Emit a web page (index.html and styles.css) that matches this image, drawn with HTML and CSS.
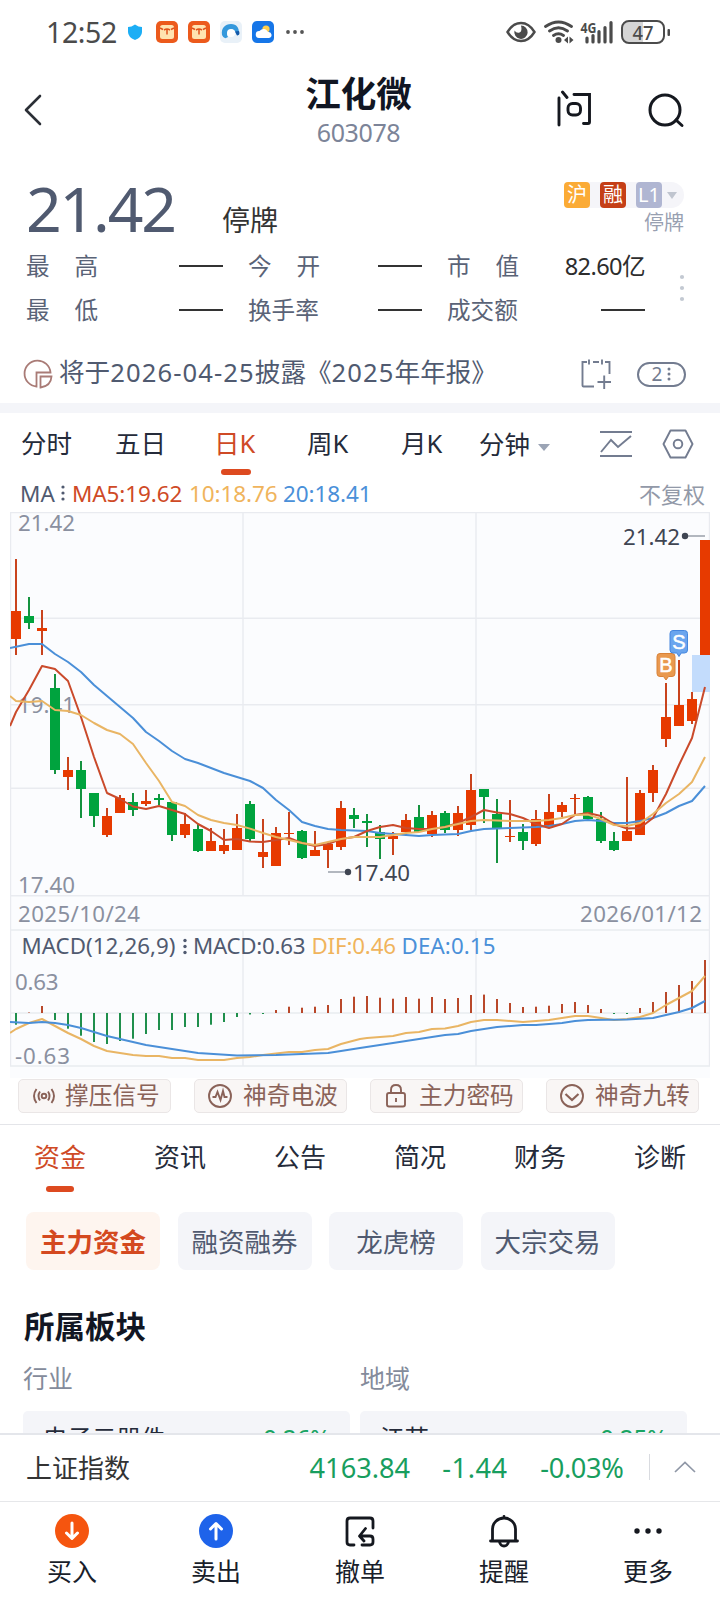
FILE: index.html
```html
<!DOCTYPE html>
<html lang="zh-CN">
<head>
<meta charset="utf-8">
<title>江化微 603078</title>
<link rel="stylesheet" href="styles.css">
</head>
<body>
<div class="screen">
  <div class="status">
    <span class="clock">12:52</span>
    <svg class="status-left" width="180" height="28" viewBox="126 18 180 28">
      <path d="M135 24.5q3.500 2.500 7 2.500v5q0 5-7 8q-7-3-7-8v-5q3.500 0 7-2.500z" fill="#1caef5"/>
      <g id="packet">
        <rect x="156" y="21" width="22" height="22" rx="5" fill="#ec5a1c"/>
        <rect x="160" y="25" width="14" height="14" rx="2.500" fill="#ffe3b0"/>
        <path d="M160 28l3 1.500M174 28l-3 1.500M164 30q3-1.800 6 0M167 29.500v5" fill="none" stroke="#e0531b" stroke-width="1.500"/>
      </g>
      <use href="#packet" x="32"/>
      <rect x="220" y="21" width="22" height="22" rx="5" fill="#e9f1f8"/>
      <path d="M222 35c-1-7 3-11 9-11s8 4 8 9q0 3-2 2l-2-4q-3-3-6 0t-1 6q-4 3-6-2z" fill="#3498dc"/>
      <path d="M239 31q1.500 4-2 4.500l-2-4z" fill="#1459a8"/>
      <circle cx="231" cy="33" r="4" fill="#fff"/>
      <rect x="252" y="21" width="22" height="22" rx="5" fill="#1676e8"/>
      <circle cx="266" cy="29" r="3.600" fill="#ffcf4d"/>
      <path d="M259 38a3.500 3.500 0 0 1 .5-7a5 5 0 0 1 8.500 1a3 3 0 0 1 1 6z" fill="#fff"/>
      <g fill="#555"><circle cx="288" cy="32" r="1.900"/><circle cx="295" cy="32" r="1.900"/><circle cx="302" cy="32" r="1.900"/></g>
    </svg>
    <svg class="status-right" width="168" height="28" viewBox="504 18 168 28">
      <path d="M507.500 32q5.500-9 13.500-9t13.500 9q-5.500 9-13.500 9t-13.500-9z" fill="none" stroke="#4b4b4b" stroke-width="2.400"/>
      <path d="M521 25.500a6.700 6.700 0 1 1-6.500 5q2 3 5 2t1.500-7z" fill="#4b4b4b"/>
      <g fill="none" stroke="#4b4b4b" stroke-width="2.800" stroke-linecap="round">
        <path d="M545.500 26.500q13-9 26 0M549.500 31q9-6.500 18 0M553.500 35.500q5-3.500 10 0"/>
      </g>
      <circle cx="558.500" cy="40" r="3" fill="#4b4b4b"/>
      <path d="M568 36.500v7l-4-3.500zM569.500 36.500v7l4-3.500z" fill="#4b4b4b"/>
      <text x="580.500" y="32.500" class="net" textLength="16" lengthAdjust="spacingAndGlyphs">4G</text>
      <path d="M587 38v4M593 35.500v6.500M599 31.500v10.500M605 27.500v14.500M611 22.500v19.500" stroke="#4b4b4b" stroke-width="3.200" stroke-linecap="round"/>
      <path d="M629 22h14v21h-14q-6 0-6-6v-9q0-6 6-6z" fill="#d5d5d5"/>
      <rect x="622" y="21" width="42" height="22" rx="7" fill="none" stroke="#4b4b4b" stroke-width="2"/>
      <rect x="667.500" y="29" width="2.500" height="7" rx="1" fill="#4b4b4b"/>
      <text x="632.500" y="39.500" class="bat" textLength="21" lengthAdjust="spacingAndGlyphs">47</text>
    </svg>
  </div>

  <header class="head">
    <svg class="back" width="20" height="34" viewBox="0 0 20 34"><path d="M17 3L3 17l14 14" fill="none" stroke="#2b2f36" stroke-width="2.600" stroke-linecap="round" stroke-linejoin="round"/></svg>
    <div class="head-title"><h1>江化微</h1><p>603078</p></div>
    <div class="head-icons">
      <svg width="38" height="38" viewBox="0 0 38 38" fill="none" stroke="#15181f" stroke-width="2.900" stroke-linecap="round"><path d="M4 8v27M7.500 2l4.500 5.500M19 4.500h15.500V32q0 1.500-1.500 1.500h-4.500"/><rect x="13" y="13.500" width="12.500" height="11.500" rx="4.500"/></svg>
      <svg width="38" height="36" viewBox="0 0 38 36" fill="none" stroke="#15181f" stroke-width="3" stroke-linecap="round"><circle cx="18" cy="17" r="15"/><path d="M29 27l6 5.500"/></svg>
    </div>
  </header>

  <section class="quote">
    <div class="quote-main">
      <span class="price">21.42</span>
      <span class="state">停牌</span>
      <div class="quote-tags">
        <div class="tags"><i class="tag-hu">沪</i><i class="tag-rong">融</i><i class="tag-l1">L1</i><b class="caret"></b></div>
        <p>停牌</p>
      </div>
    </div>
    <div class="stats">
      <div class="grid">
        <span class="k">最<em></em>高</span><span class="v"><u></u></span>
        <span class="k">今<em></em>开</span><span class="v"><u></u></span>
        <span class="k">市<em></em>值</span><span class="v">82.60亿</span>
        <span class="k">最<em></em>低</span><span class="v"><u></u></span>
        <span class="k">换手率</span><span class="v"><u></u></span>
        <span class="k">成交额</span><span class="v"><u></u></span>
      </div>
      <svg class="more" width="6" height="28" viewBox="0 0 6 28" fill="#c3c9d2"><circle cx="3" cy="3" r="2.100"/><circle cx="3" cy="14" r="2.100"/><circle cx="3" cy="25" r="2.100"/></svg>
    </div>
  </section>

  <section class="notice">
    <svg width="30" height="30" viewBox="0 0 30 30" fill="none" stroke="#a97b76" stroke-width="1.800"><path d="M13.500 27.500A13 13 0 1 1 27.500 13.500H13.500z"/><path d="M17.500 17.500h11q-.5 9.500-11 11z"/></svg>
    <p>将于<span>2026-04-25</span>披露《<span>2025</span>年年报》</p>
    <svg class="cal" width="30" height="32" viewBox="0 0 30 32" fill="none" stroke="#737c90" stroke-width="1.900"><path d="M6 4H1.500v23.500q0 1 1 1H13M12 4h6M24 4h4.500v12M8 1.500v5M21 1.500v5M16.500 24H30M23.200 17.500V31"/></svg>
    <div class="count"><span>2</span><svg width="4" height="14" viewBox="0 0 4 14" fill="#737c90"><circle cx="2" cy="2" r="1.500"/><circle cx="2" cy="7" r="1.500"/><circle cx="2" cy="12" r="1.500"/></svg></div>
  </section>
  <div class="band"></div>

  <nav class="periods">
    <span>分时</span><span>五日</span><span class="on">日K</span><span>周K</span><span>月K</span><span class="mins">分钟<b class="caret dark"></b></span>
    <svg width="32" height="28" viewBox="0 0 32 28" fill="none" stroke="#737c90" stroke-width="1.900"><path d="M0 2h32M0 26h32M1 22l10-12 7 7L31 6"/></svg>
    <svg class="hex" width="32" height="30" viewBox="0 0 32 30" fill="none" stroke="#737c90" stroke-width="1.900"><path d="M8.500 1.500h15L30.500 15l-7 13.500h-15L1.500 15z" stroke-linejoin="round"/><circle cx="16" cy="15" r="4.300"/></svg>
  </nav>

  <div class="ma">
    <span class="ma-name">MA</span>
    <svg width="4" height="16" viewBox="0 0 4 16" fill="#505a70"><circle cx="2" cy="2" r="1.600"/><circle cx="2" cy="8" r="1.600"/><circle cx="2" cy="14" r="1.600"/></svg>
    <span class="ma5">MA5:19.62</span><span class="ma10">10:18.76</span><span class="ma20">20:18.41</span>
    <span class="adjust">不复权</span>
  </div>

  <svg class="chart" width="700" height="566" viewBox="10 512 700 566">
    <rect x="10" y="512" width="700" height="566" fill="#fbfcfe"/>
    <g fill="none" stroke="#e9ebf0" stroke-width="1.400">
      <path d="M10.500 1066V512.500H709.500V1066M10 618.300h700M10 704.800h700M10 788.300h700M10 895.700h700M10 930h700M10 1013h700M10 1066h700M243 512v384M476 512v384M243 930v136M476 930v136"/>
    </g>
    <g class="axis">
      <text x="18" y="531" textLength="57">21.42</text>
      <text x="18" y="712.500" textLength="57">19.41</text>
      <text x="18" y="892.500" textLength="57">17.40</text>
      <text x="18" y="922" textLength="122">2025/10/24</text>
      <text x="580" y="922" textLength="122">2026/01/12</text>
      <text x="15" y="989.500" textLength="43.500">0.63</text>
      <text x="15" y="1063.500" textLength="55">-0.63</text>
    </g>
    <g class="legend">
      <text x="21.500" y="953.500" textLength="154" fill="#505a70">MACD(12,26,9)</text>
      <text x="193" y="953.500" textLength="112.500" fill="#505a70">MACD:0.63</text>
      <text x="311.500" y="953.500" textLength="84.500" fill="#f0b45c">DIF:0.46</text>
      <text x="401.500" y="953.500" textLength="94" fill="#4a90d9">DEA:0.15</text>
      <g fill="#505a70"><circle cx="185" cy="940.500" r="1.700"/><circle cx="185" cy="946.500" r="1.700"/><circle cx="185" cy="952.500" r="1.700"/></g>
    </g>
    <rect x="692" y="655" width="18" height="37" fill="#c3dcfc"/>
    <g id="series"></g>
    <g class="marks">
      <path d="M328 872h18M686 536h19" stroke="#9ba0aa" stroke-width="1.700"/>
      <circle cx="348" cy="872" r="3.200"/><circle cx="685" cy="536" r="3.200"/>
      <text x="353" y="880.500" textLength="57">17.40</text>
      <text x="623" y="545" textLength="57">21.42</text>
    </g>
    <g class="flags">
      <path d="M660 653.500h12q3 0 3 3v17q0 3-3 3h-3.500l-2.500 3.500-2.500-3.500H660q-3 0-3-3v-17q0-3 3-3z" class="flag-b"/>
      <path d="M673 630.500h11.500q3 0 3 3v16.500q0 3-3 3h-3.300l-2.200 3.500-2.200-3.500H673q-3 0-3-3v-16.500q0-3 3-3z" class="flag-s"/>
      <text x="666" y="672" text-anchor="middle">B</text>
      <text x="678.800" y="649" text-anchor="middle">S</text>
    </g>
  </svg>

  <div class="signals">
    <div><svg width="26" height="24" viewBox="0 0 26 24"><circle cx="13" cy="12" r="2.300"/><path d="M9 7.500q-3 4.500 0 9M17 7.500q3 4.500 0 9M5.500 5q-5 7 0 14M20.500 5q5 7 0 14"/></svg><span>撑压信号</span></div>
    <div><svg width="26" height="24" viewBox="0 0 26 24"><circle cx="13" cy="12" r="11"/><path d="M5.500 13h3l2-5 3 8 2.500-9 1.500 6h3"/></svg><span>神奇电波</span></div>
    <div><svg width="26" height="24" viewBox="0 0 26 24"><rect x="4" y="9" width="18" height="13.500" rx="2"/><path d="M8 9V6q0-5 5-5t5 5v3M13 14v4"/></svg><span>主力密码</span></div>
    <div><svg width="26" height="24" viewBox="0 0 26 24"><circle cx="13" cy="12" r="11"/><path d="M6.500 10l6.500 6 6.500-6" stroke-width="2.200"/></svg><span>神奇九转</span></div>
  </div>

  <nav class="tabs"><span class="on">资金</span><span>资讯</span><span>公告</span><span>简况</span><span>财务</span><span>诊断</span></nav>

  <div class="chips"><span class="on">主力资金</span><span>融资融券</span><span>龙虎榜</span><span>大宗交易</span></div>

  <section class="sectors">
    <h2>所属板块</h2>
    <div class="cols">
      <div><h3>行业</h3><div class="card"><span>电子元器件</span><b>-0.26%</b></div></div>
      <div><h3>地域</h3><div class="card"><span>江苏</span><b>-0.25%</b></div></div>
    </div>
  </section>

  <div class="index">
    <span class="index-name">上证指数</span><span class="n1">4163.84</span><span class="n2">-1.44</span><span class="n3">-0.03%</span>
    <i></i>
    <svg width="22" height="12" viewBox="0 0 22 12"><path d="M1 11L11 1.500 21 11" fill="none" stroke="#8f97a6" stroke-width="1.700"/></svg>
  </div>

  <footer class="actions">
    <div><svg width="36" height="36" viewBox="0 0 36 36"><circle cx="18" cy="18" r="17" fill="#f5550f"/><path d="M18 10v15M12.500 20l5.500 5.500 5.500-5.500" class="arrow"/></svg>买入</div>
    <div><svg width="36" height="36" viewBox="0 0 36 36"><circle cx="18" cy="18" r="17" fill="#1e63ea"/><path d="M18 26V11M12.500 16l5.500-5.500 5.500 5.500" class="arrow"/></svg>卖出</div>
    <div><svg width="36" height="36" viewBox="0 0 36 36" class="line"><path d="M12 32H8q-3 0-3-3V8q0-3 3-3h20q3 0 3 3v7M20 32h8q3 0 3-3v-3q0-3-3-3H18M23.500 15.500L17.500 23l4.500 5"/></svg>撤单</div>
    <div><svg width="36" height="36" viewBox="0 0 36 36" class="line"><path d="M6.500 27V16a11.500 11 0 0 1 23 0v11M4.500 28h27M18 3.500v1M13.500 29q1 4 4.500 4t4.500-4"/></svg>提醒</div>
    <div><svg width="36" height="36" viewBox="0 0 36 36" fill="#15181f"><circle cx="7" cy="18" r="2.700"/><circle cx="18" cy="18" r="2.700"/><circle cx="29" cy="18" r="2.700"/></svg>更多</div>
  </footer>
</div>
<script src="chart.js"></script>
</body>
</html>
```

FILE: styles.css
```css
* { box-sizing: border-box; margin: 0; padding: 0; }
body { width: 720px; height: 1600px; overflow: hidden; background: #fff; color: #252b3a; font-family: "Noto Sans", "Noto Sans CJK SC", sans-serif; font-size: 25px; }
svg { display: block; flex: none; }
i, em { font-style: normal; }
.screen { display: flex; flex-direction: column; width: 720px; height: 1600px; overflow: hidden; }
.screen > * { flex: none; }

.status { display: flex; align-items: center; height: 64px; padding: 0 48px 0 46px; }
.clock { width: 80px; font-size: 28.500px; letter-spacing: -0.400px; color: #4b4b4b; line-height: 64px; }
.status-right { margin-left: auto; }
.net { font: bold 14px "Noto Sans", sans-serif; fill: #4b4b4b; }
.bat { font: 500 20px "Noto Sans", sans-serif; fill: #4b4b4b; }

.head { display: grid; grid-template-columns: 178px 1fr 180px; height: 106px; padding: 0 23px 0 22px; }
.back { margin: 29px 0 0 1px; }
.head-title { text-align: center; }
.head-title h1 { font-size: 35.500px; line-height: 44px; margin-top: 7px; color: #111623; font-weight: 700; }
.head-title p { font-size: 25px; line-height: 30px; margin-top: 2px; color: #7c8498; letter-spacing: -0.400px; }
.head-icons { display: flex; justify-content: space-between; width: 130px; margin: 26px 0 0 38px; align-items: flex-start; }
.head-icons svg + svg { margin-top: 3px; }

.quote { height: 175px; padding: 0 26px; }
.quote-main { display: flex; height: 74px; }
.price { width: 196px; font-size: 62.500px; line-height: 75px; letter-spacing: -2.200px; color: #505a70; }
.state { font-size: 28px; line-height: 40px; margin-top: 30px; color: #333; }
.quote-tags { margin-left: auto; padding: 12px 10px 0 0; text-align: right; }
.quote-tags p { font-size: 20px; line-height: 26px; margin-top: 2px; color: #98a0b1; }
.tags { display: flex; gap: 10px; height: 26px; background: #f5f5f9; border-radius: 5px 13px 13px 5px; width: 120px; }
.tags i { width: 26px; height: 26px; border-radius: 4px; color: #fff; font-size: 20px; line-height: 25px; text-align: center; }
.tag-hu { background: #fbab36; }
.tag-rong { background: #c53f17; }
.tags .tag-l1 { background: #b0b6d2; }
.caret { width: 0; height: 0; border: 5.500px solid transparent; border-top: 7px solid #c0c5cf; border-bottom: 0; }
.tags .caret { margin: 10px 0 0 -5px; }
.stats { display: flex; height: 88px; }
.grid { display: grid; grid-template-columns: 72px 150px 72px 127px 72px 126px; grid-template-rows: 44px 44px; width: 619px; font-size: 23.600px; line-height: 44px; }
.k { color: #5a6377; display: flex; justify-content: space-between; width: 72px; }
.v { display: flex; justify-content: flex-end; align-items: center; color: #2d2d2d; letter-spacing: -0.600px; white-space: nowrap; }
.v:nth-child(6n+2) { padding-right: 25px; }
.v:nth-child(6n+4) { padding-right: 25px; }
.v u { width: 44px; height: 2px; background: #333; }
.more { margin: 30px 0 0 34px; }

.notice { display: flex; align-items: center; height: 58px; padding: 0 34px 0 23px; color: #505a70; }
.notice p { font-size: 25.600px; line-height: 56px; margin: -3px 0 0 6px; white-space: nowrap; }
.notice p span { letter-spacing: 1.100px; }
.notice .cal { margin-left: auto; margin-right: 26px; }
.count { display: flex; align-items: center; justify-content: center; gap: 5px; width: 49px; height: 25px; border: 2px solid #737c90; border-radius: 13px; font-size: 19px; color: #737c90; line-height: 20px; }
.band { height: 10px; background: #f4f5f9; }

.periods { display: flex; height: 63px; padding: 0 26px 0 21px; line-height: 61px; color: #252b3a; font-size: 25.500px; }
.periods span { width: 94px; white-space: nowrap; position: relative; }
.periods .on, .tabs .on { color: #cf4a26; }
.periods span:nth-child(3) { margin-left: 5px; width: 93px; }
.periods span:nth-child(4) { width: 94px; }
.periods span:nth-child(5) { width: 78px; }
.periods .mins { display: flex; width: 121px; align-items: center; }
.caret.dark { border-width: 7.500px 6.500px 0; border-top-color: #9ba4b5; margin: 6px 0 0 8px; }
.periods .on::after { content: ""; position: absolute; left: 7px; top: 56px; width: 30px; height: 6px; border-radius: 3px; background: #dd4a20; }
.periods svg { margin-top: 17px; }
.periods .hex { margin: 16px 0 0 30px; }

.ma { display: flex; align-items: center; height: 36px; padding: 0 15px 2px 20px; font-size: 22.500px; }
.ma-name { width: 41px; color: #505a70; }
.ma svg { margin-right: 7px; }
.ma5 { width: 117px; color: #cf4a26; }
.ma10 { width: 94px; color: #f0b45c; }
.ma20 { color: #4a90d9; }
.ma5, .ma10, .ma20 { letter-spacing: -0.100px; white-space: nowrap; }
.adjust { margin-left: auto; color: #9299a8; font-size: 22px; }

.chart { margin-left: 10px; }
.chart text { font-family: "Noto Sans", sans-serif; font-size: 22.300px; }
.axis text { fill: #8a90a0; }
.marks { fill: #3f4552; }
.flags text { font: 20px "Liberation Sans", sans-serif; fill: #fff; stroke: #fff; stroke-width: 0.500; }
.flag-b { fill: #e9994f; stroke: #d98238; }
.flag-s { fill: #6aa5ee; stroke: #4586de; }

.signals { display: flex; gap: 23px; height: 47px; padding: 1px 18px 0; border-bottom: 1.500px solid #e4e5e9; }
.signals div { display: flex; align-items: center; gap: 8px; width: 153px; height: 34px; padding-left: 12px; border: 1px solid #eae6e6; border-radius: 5px; background: #f9f6f5; color: #8a6258; font-size: 23.700px; white-space: nowrap; }
.signals span { margin-top: -4px; }
.signals svg { fill: none; stroke: #8a6258; stroke-width: 1.900; }
.signals div:nth-child(n+2) { gap: 10px; }

.tabs { display: flex; height: 87px; line-height: 65px; font-size: 26px; color: #252b3a; }
.tabs span { flex: 1; text-align: center; position: relative; }
.tabs .on::after { content: ""; position: absolute; left: 46px; top: 61px; width: 28px; height: 6px; border-radius: 3px; background: #dd4a20; }

.chips { display: flex; gap: 17.500px; height: 58px; padding-left: 26px; }
.chips span { width: 134px; height: 58px; border-radius: 8px; background: #f4f5f9; color: #505a70; font-size: 26.500px; line-height: 60px; text-align: center; }
.chips .on { background: #fef5ef; color: #d4491f; font-weight: 700; }

.sectors { height: 163px; padding: 34px 23px 0; overflow: hidden; }
.sectors h2 { font-size: 30.500px; line-height: 44px; color: #111623; padding-left: 1px; }
.sectors h3 { font-weight: 400; font-size: 25px; line-height: 34px; color: #848b9b; margin-bottom: 16px; }
.cols { display: flex; gap: 10px; margin-top: 13px; }
.card { display: flex; justify-content: space-between; width: 327px; height: 60px; padding: 0 20px; border-radius: 5px; background: #f4f5f9; line-height: 55px; font-size: 24.500px; }
.card b { font-weight: 400; color: #19a463; letter-spacing: -0.400px; }

.index { display: flex; align-items: center; height: 69px; padding: 0 24px 2px 26px; border-top: 2px solid #e4e6eb; border-bottom: 1px solid #e6e7ea; font-size: 27.200px; color: #189e5e; }
.index-name { width: 284px; color: #333; font-size: 26px; }
.n1 { width: 133px; } .n2 { width: 98px; letter-spacing: 0.500px; } .n3 { width: 109px; letter-spacing: -0.300px; }
.index i { width: 1px; height: 26px; background: #d9dbe0; margin-right: 24px; }

.actions { display: flex; height: 98px; padding-top: 11px; color: #191e2b; }
.actions div { flex: 1; display: flex; flex-direction: column; align-items: center; font-size: 25px; line-height: 36px; gap: 4px; }
.arrow, .line { fill: none; stroke: #fff; stroke-width: 3; stroke-linecap: round; stroke-linejoin: round; }
.line { stroke: #15181f; stroke-width: 2.800; }
```

FILE: chart.js
```js
// Each candle: colour, high, body top, body bottom, low (chart units)
const candles = [
  ["r",559,611,639,655],["g",597,616,623,629],["r",610,628,631,655],["g",674,688,770,774],["r",757,770,777,790],
  ["g",761,770,789,818],["g",793,793,816,827],["r",808,816,835,837],["r",795,798,813,813],["g",793,802,810,816],
  ["r",790,801,804,806],["g",794,798,800,805],["g",802,802,835,841],["r",813,824,835,838],["g",824,829,851,852],
  ["r",828,841,851,851],["r",829,845,851,854],["r",814,828,850,850],["g",801,804,839,841],["r",819,852,857,868],
  ["r",827,833,866,866],["r",812,833,834,845],["g",830,831,858,859],["r",831,850,856,856],["r",842,844,850,868],
  ["r",801,808,847,850],["g",808,815,819,828],["g",814,821,823,847],["g",825,832,839,859],["r",832,836,839,855],
  ["r",814,820,832,832],["g",805,817,832,832],["r",811,815,834,837],["g",811,813,830,833],["r",806,813,830,836],
  ["r",774,790,825,830],["g",789,789,797,823],["g",799,814,828,863],["r",800,836,837,842],["g",824,832,841,850],
  ["r",810,819,844,846],["r",794,812,826,826],["r",802,805,812,817],["r",794,798,799,814],["g",796,797,819,819],
  ["g",812,819,841,843],["g",832,841,850,851],["r",777,831,841,841],["r",790,793,835,835],["r",765,770,793,802],
  ["r",683,717,739,747],["r",660,705,726,726],["r",692,699,721,724],["r",540,540,655,655]
];
const macd = [1024.7,1012.5,1006,1020,1028.7,1035.7,1042,1044,1041,1038.7,1034,1030,1030,1027,1027,1024.7,1022,1017,1014.5,1014,
  1010,1006.7,1007.7,1006.7,1005,999,996.7,996,997.7,998.7,997,998.7,997,999,998,995,994.6,999,1003,1007,1006.7,1005.7,
  1004,1002,1005,1009,1014,1014,1008,1002,992,985,981,960];
const lines = [
  ["#4a8fd8", "10,648 29,644 42,644 55,654 68,662 81,672 94,685 107,696 120,707 133,718 146,732 159,741 172,751 185,759 198,763 211,768 224,773 237,777 250,781 263,788 276,800 289,810 302,822 315,826 328,829 341,830 367,831 380,833 393,834 406,835 419,836 432,835 458,834 471,831 484,829 510,828 536,827 549,826 562,824 575,821 588,820 601,821 614,823 627,823 640,821 653,818 666,813 679,806 692,801 705,786"],
  ["#ca4a2b", "10,726 16,712 29,690 42,666 55,669 68,681 81,717 94,757 107,793 120,799 133,806.5 146,809 159,806 172,810 185,814 198,824 211,831 224,840 237,839 250,841.6 263,842 276,840 289,838 302,843 315,846 328,844 341,839 354,837 367,831 380,827 393,825 406,828 419,829 432,829 445,827 458,823 471,817 484,810 497,812.6 510,814 523,818 536,824 549,828 562,824 575,815 588,813 601,816 614,824 627,828.6 640,828 653,818 666,794 679,765 692,738 705,687"],
  ["#e9b564", "10,696 16,701 29,702 42,701 55,710 68,711 81,715 94,723 107,730 120,734 133,744 146,763 159,781 172,802 185,806 198,815 211,820 224,823 237,825 250,828.6 263,833 276,837 289,840 302,843 315,845 328,842 341,839 354,837 380,837 393,835 406,833 419,832 432,829 445,827 458,824 471,821 484,820 497,820.6 510,821 536,821 549,820 562,818 575,815 588,814.6 601,819 614,825 627,826 640,823 653,814 666,803 679,794 692,782 705,757"],
  ["#e9b564", "10,1033 16,1029 29,1023 42,1019 55,1026 68,1033 81,1039 94,1046 107,1051 120,1053 133,1055 146,1056 159,1056 172,1058 185,1058 198,1060 224,1060 237,1058 250,1057 263,1055 276,1053.6 289,1052 302,1052 315,1050 328,1049 341,1044 360,1039 367,1038 393,1036 406,1033 419,1032 432,1029 445,1028.6 458,1026 471,1022 484,1020 497,1020 523,1022 549,1020 562,1018 575,1016 588,1016 601,1018 614,1020 627,1019 640,1017 653,1013 666,1005 679,998 692,991 705,976"],
  ["#4a8fd8", "10,1022 29,1023 42,1022 55,1023 68,1025 81,1028 94,1032 107,1036 146,1045 172,1049 198,1053 237,1055.6 276,1055 302,1054 328,1053 341,1051 360,1048 393,1043 419,1039 445,1035 458,1034 471,1031 497,1027 523,1025 536,1025 562,1023 575,1021 588,1020 627,1019.6 653,1018 666,1015 679,1012 692,1008 705,1001"]
];
const fill = { r: "#e73a00", g: "#00a33e" };
const wick = { r: "#c9431d", g: "#14923f" };
let out = "";
candles.forEach(([c, hi, top, bottom, lo], i) => {
  const x = 16 + 13 * i;
  out += `<rect x="${x - 1}" y="${hi}" width="2" height="${lo - hi}" fill="${wick[c]}"/>`;
  out += `<rect x="${x - 5}" y="${top}" width="10" height="${Math.max(1, bottom - top)}" fill="${fill[c]}"/>`;
});
macd.forEach((y, i) => {
  const x = 15 + 13 * i;
  out += `<rect x="${x}" y="${Math.min(y, 1013)}" width="2" height="${Math.abs(y - 1013)}" fill="${y > 1013 ? "#1f8f4c" : "#b9482a"}"/>`;
});
lines.forEach(([stroke, pts]) => {
  out += `<polyline points="${pts}" fill="none" stroke="${stroke}" stroke-width="2" stroke-linejoin="round"/>`;
});
document.getElementById("series").innerHTML = out;
```
